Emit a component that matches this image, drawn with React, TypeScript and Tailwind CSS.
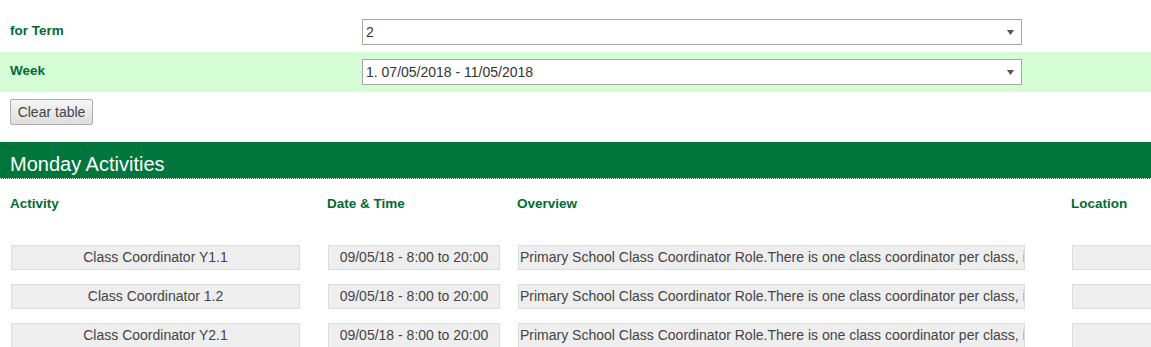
import React from "react";

function FakeSelect({ value }: { value: string }) {
  return (
    <div className="w-[660px] h-[26px] border border-[#a9a9a9] bg-white flex items-center justify-between pl-[3px] pr-[7px] text-[14px] text-[#333] box-border">
      <span>{value}</span>
      <svg width="7" height="5" viewBox="0 0 7 5">
        <path d="M0 0 H7 L3.5 5 Z" fill="#555" />
      </svg>
    </div>
  );
}

const rows = ["Class Coordinator Y1.1", "Class Coordinator 1.2", "Class Coordinator Y2.1"];
const overview = "Primary School Class Coordinator Role.There is one class coordinator per class, i";

export default function App() {
  return (
    <div className="w-[1151px] h-[347px] overflow-hidden bg-white font-['Liberation_Sans',Arial,sans-serif]">
      <div className="h-[52px] flex items-start pt-[19px]">
        <div className="w-[362px] pl-[10px] pt-[2px] text-[13.5px] font-bold text-[#006b35]">for Term</div>
        <FakeSelect value="2" />
      </div>
      <div className="h-[40px] flex items-start pt-[7px] bg-[#d5fdd5]">
        <div className="w-[362px] pl-[10px] pt-[2px] text-[13.5px] font-bold text-[#006b35]">Week</div>
        <FakeSelect value="1. 07/05/2018 - 11/05/2018" />
      </div>
      <div className="pl-[10px] pt-[7px]">
        <button className="w-[83px] h-[26px] border border-[#adadad] rounded-[2px] bg-gradient-to-b from-[#f6f6f6] to-[#dedede] text-[14px] text-[#444] leading-none">
          Clear table
        </button>
      </div>
      <div className="mt-[17px] h-[37px] bg-[#00763d] border-b border-dotted border-white flex items-center pl-[10px] pt-[7px] text-[20px] text-white">
        Monday Activities
      </div>
      <div className="grid grid-cols-[317px_190px_554px_1fr] pl-[10px] pt-[15px] text-[13.5px] font-bold text-[#006b35]">
        <div>Activity</div>
        <div>Date &amp; Time</div>
        <div>Overview</div>
        <div>Location</div>
      </div>
      <div className="flex flex-col gap-[14px] pt-[31px] pl-[10px]">
        {rows.map((r) => (
          <div key={r} className="grid grid-cols-[317px_190px_554px_1fr] text-[14px] text-[#444]">
            <div className="ml-[1px] w-[289px] h-[25px] bg-[#eeeeee] border border-[#dcdcdc] flex items-center justify-center">
              {r}
            </div>
            <div className="ml-[1px] w-[172px] h-[25px] bg-[#eeeeee] border border-[#dcdcdc] flex items-center justify-center">
              09/05/18 - 8:00 to 20:00
            </div>
            <div className="ml-[1px] w-[507px] h-[25px] bg-[#eeeeee] border border-[#dcdcdc] flex items-center pl-[1px] overflow-hidden whitespace-nowrap">
              {overview}
            </div>
            <div className="ml-[1px] w-[100px] h-[25px] bg-[#eeeeee] border border-[#dcdcdc]" />
          </div>
        ))}
      </div>
    </div>
  );
}
